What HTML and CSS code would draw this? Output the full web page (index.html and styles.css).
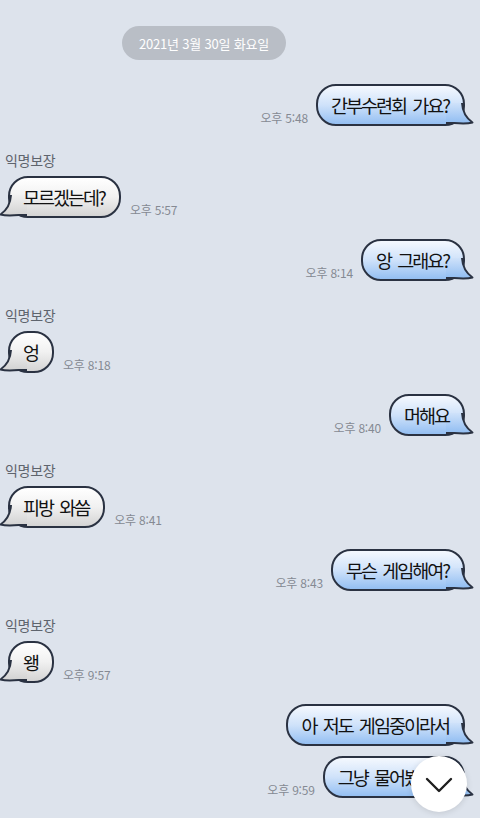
FILE: index.html
```html
<!DOCTYPE html>
<html lang="ko">
<head>
<meta charset="utf-8">
<link rel="stylesheet" href="styles.css">
</head>
<body>
<svg class="defs" width="0" height="0" aria-hidden="true">
  <defs>
    <linearGradient id="gout" gradientUnits="userSpaceOnUse" x1="0" y1="-19" x2="0" y2="19">
      <stop offset="0" stop-color="#f4f8fe"/>
      <stop offset="0.5" stop-color="#cfe2fa"/>
      <stop offset="1" stop-color="#94bff2"/>
    </linearGradient>
    <linearGradient id="gin" gradientUnits="userSpaceOnUse" x1="0" y1="-19" x2="0" y2="19">
      <stop offset="0" stop-color="#ffffff"/>
      <stop offset="0.5" stop-color="#f1f1f1"/>
      <stop offset="1" stop-color="#d4d4d4"/>
    </linearGradient>
  </defs>
</svg>

<main class="chat">
  <div class="date">2021년 3월 30일 화요일</div>

  <div class="row out first">
    <span class="time">오후 5:48</span>
    <div class="bubble out"><span class="txt">간부수련회 가요?</span><svg class="tail" viewBox="0 0 28 22"><path class="tf-out" d="M0 0 L16 0 C16.5 8 20 15 26.5 19.5 C21 21 14 20.5 8 20 L0 20 Z"/><path class="ts" d="M16 0 C16.5 8 20 15 26.5 19.5 C21 21 14 20.5 8 20 L0 20"/></svg></div>
  </div>

  <div class="name">익명보장</div>
  <div class="row in">
    <div class="bubble in"><span class="txt">모르겠는데?</span><svg class="tail" viewBox="0 0 28 22"><path class="tf-in" d="M0 0 L16 0 C16.5 8 20 15 26.5 19.5 C21 21 14 20.5 8 20 L0 20 Z"/><path class="ts" d="M16 0 C16.5 8 20 15 26.5 19.5 C21 21 14 20.5 8 20 L0 20"/></svg></div>
    <span class="time">오후 5:57</span>
  </div>

  <div class="row out">
    <span class="time">오후 8:14</span>
    <div class="bubble out"><span class="txt">앙 그래요?</span><svg class="tail" viewBox="0 0 28 22"><path class="tf-out" d="M0 0 L16 0 C16.5 8 20 15 26.5 19.5 C21 21 14 20.5 8 20 L0 20 Z"/><path class="ts" d="M16 0 C16.5 8 20 15 26.5 19.5 C21 21 14 20.5 8 20 L0 20"/></svg></div>
  </div>

  <div class="name">익명보장</div>
  <div class="row in">
    <div class="bubble in"><span class="txt">엉</span><svg class="tail" viewBox="0 0 28 22"><path class="tf-in" d="M0 0 L16 0 C16.5 8 20 15 26.5 19.5 C21 21 14 20.5 8 20 L0 20 Z"/><path class="ts" d="M16 0 C16.5 8 20 15 26.5 19.5 C21 21 14 20.5 8 20 L0 20"/></svg></div>
    <span class="time">오후 8:18</span>
  </div>

  <div class="row out">
    <span class="time">오후 8:40</span>
    <div class="bubble out"><span class="txt">머해요</span><svg class="tail" viewBox="0 0 28 22"><path class="tf-out" d="M0 0 L16 0 C16.5 8 20 15 26.5 19.5 C21 21 14 20.5 8 20 L0 20 Z"/><path class="ts" d="M16 0 C16.5 8 20 15 26.5 19.5 C21 21 14 20.5 8 20 L0 20"/></svg></div>
  </div>

  <div class="name">익명보장</div>
  <div class="row in">
    <div class="bubble in"><span class="txt">피방 와씀</span><svg class="tail" viewBox="0 0 28 22"><path class="tf-in" d="M0 0 L16 0 C16.5 8 20 15 26.5 19.5 C21 21 14 20.5 8 20 L0 20 Z"/><path class="ts" d="M16 0 C16.5 8 20 15 26.5 19.5 C21 21 14 20.5 8 20 L0 20"/></svg></div>
    <span class="time">오후 8:41</span>
  </div>

  <div class="row out">
    <span class="time">오후 8:43</span>
    <div class="bubble out"><span class="txt">무슨 게임해여?</span><svg class="tail" viewBox="0 0 28 22"><path class="tf-out" d="M0 0 L16 0 C16.5 8 20 15 26.5 19.5 C21 21 14 20.5 8 20 L0 20 Z"/><path class="ts" d="M16 0 C16.5 8 20 15 26.5 19.5 C21 21 14 20.5 8 20 L0 20"/></svg></div>
  </div>

  <div class="name">익명보장</div>
  <div class="row in">
    <div class="bubble in"><span class="txt">왱</span><svg class="tail" viewBox="0 0 28 22"><path class="tf-in" d="M0 0 L16 0 C16.5 8 20 15 26.5 19.5 C21 21 14 20.5 8 20 L0 20 Z"/><path class="ts" d="M16 0 C16.5 8 20 15 26.5 19.5 C21 21 14 20.5 8 20 L0 20"/></svg></div>
    <span class="time">오후 9:57</span>
  </div>

  <div class="row out">
    <div class="bubble out"><span class="txt">아 저도 게임중이라서</span><svg class="tail" viewBox="0 0 28 22"><path class="tf-out" d="M0 0 L16 0 C16.5 8 20 15 26.5 19.5 C21 21 14 20.5 8 20 L0 20 Z"/><path class="ts" d="M16 0 C16.5 8 20 15 26.5 19.5 C21 21 14 20.5 8 20 L0 20"/></svg></div>
  </div>
  <div class="row out cont">
    <span class="time">오후 9:59</span>
    <div class="bubble out"><span class="txt">그냥 물어봤어요</span><svg class="tail" viewBox="0 0 28 22"><path class="tf-out" d="M0 0 L16 0 C16.5 8 20 15 26.5 19.5 C21 21 14 20.5 8 20 L0 20 Z"/><path class="ts" d="M16 0 C16.5 8 20 15 26.5 19.5 C21 21 14 20.5 8 20 L0 20"/></svg></div>
  </div>
</main>

<button class="scroll-down" aria-label="아래로">
  <svg viewBox="0 0 56 56" width="56" height="56"><path d="M16 23 L28 35 L40 23" fill="none" stroke="#1f1f1f" stroke-width="2.4" stroke-linecap="round" stroke-linejoin="round"/></svg>
</button>
</body>
</html>
```

FILE: styles.css
```css
html, body {
  margin: 0;
  padding: 0;
}
body {
  width: 480px;
  height: 818px;
  overflow: hidden;
  background: #dde3ec;
  font-family: "Noto Sans CJK KR", "Noto Sans", sans-serif;
  position: relative;
}
.defs {
  position: absolute;
  width: 0;
  height: 0;
}
.chat {
  display: flex;
  flex-direction: column;
}
.date {
  align-self: flex-start;
  margin: 26px 0 3px 122px;
  width: 164px;
  height: 34px;
  border-radius: 17px;
  background: #b9bec6;
  color: #ffffff;
  font-size: 13px;
  letter-spacing: -0.2px;
  display: flex;
  align-items: center;
  justify-content: center;
}
.row {
  display: flex;
  align-items: flex-end;
}
.row.out {
  justify-content: flex-end;
  gap: 8px;
  padding-right: 15px;
  margin-top: 21px;
}
.row.out.cont {
  margin-top: 10px;
}
.row.in {
  justify-content: flex-start;
  gap: 9px;
  padding-left: 8px;
}
.name {
  margin: 26px 0 8px 5px;
  height: 16px;
  line-height: 16px;
  font-size: 14px;
  letter-spacing: -0.3px;
  color: #5e646d;
}
.time {
  font-size: 12px;
  line-height: 14px;
  color: #858a93;
  letter-spacing: -0.2px;
  margin-bottom: 1px;
}
.bubble {
  position: relative;
  box-sizing: border-box;
  height: 42px;
  border: 2px solid #2a3242;
  border-radius: 20px;
  padding: 0 12px 0 13px;
  display: flex;
  align-items: center;
  font-size: 18.5px;
  font-weight: 400;
  letter-spacing: -2px;
  word-spacing: 3px;
  color: #111111;
  white-space: nowrap;
}
.txt {
  position: relative;
  z-index: 1;
  margin-right: 2px;
}
.bubble.out {
  background: linear-gradient(to bottom, #f4f8fe 0%, #cfe2fa 50%, #94bff2 100%);
}
.bubble.in {
  background: linear-gradient(to bottom, #ffffff 0%, #f1f1f1 50%, #d4d4d4 100%);
}
.tail {
  position: absolute;
  width: 28px;
  height: 22px;
  bottom: -1px;
  overflow: visible;
}
.bubble.out .tail {
  right: -11px;
}
.bubble.in .tail {
  left: -11px;
  transform: scaleX(-1);
}
.tf-out {
  fill: url(#gout);
}
.tf-in {
  fill: url(#gin);
}
.ts {
  fill: none;
  stroke: #2a3242;
  stroke-width: 2;
  stroke-linejoin: round;
}
.scroll-down {
  position: absolute;
  right: 13px;
  bottom: 6px;
  width: 56px;
  height: 56px;
  padding: 0;
  border: none;
  border-radius: 50%;
  background: #ffffff;
  box-shadow: 0 1px 6px rgba(0, 0, 0, 0.12);
  display: flex;
  align-items: center;
  justify-content: center;
  z-index: 5;
}
.scroll-down svg {
  display: block;
}
```
